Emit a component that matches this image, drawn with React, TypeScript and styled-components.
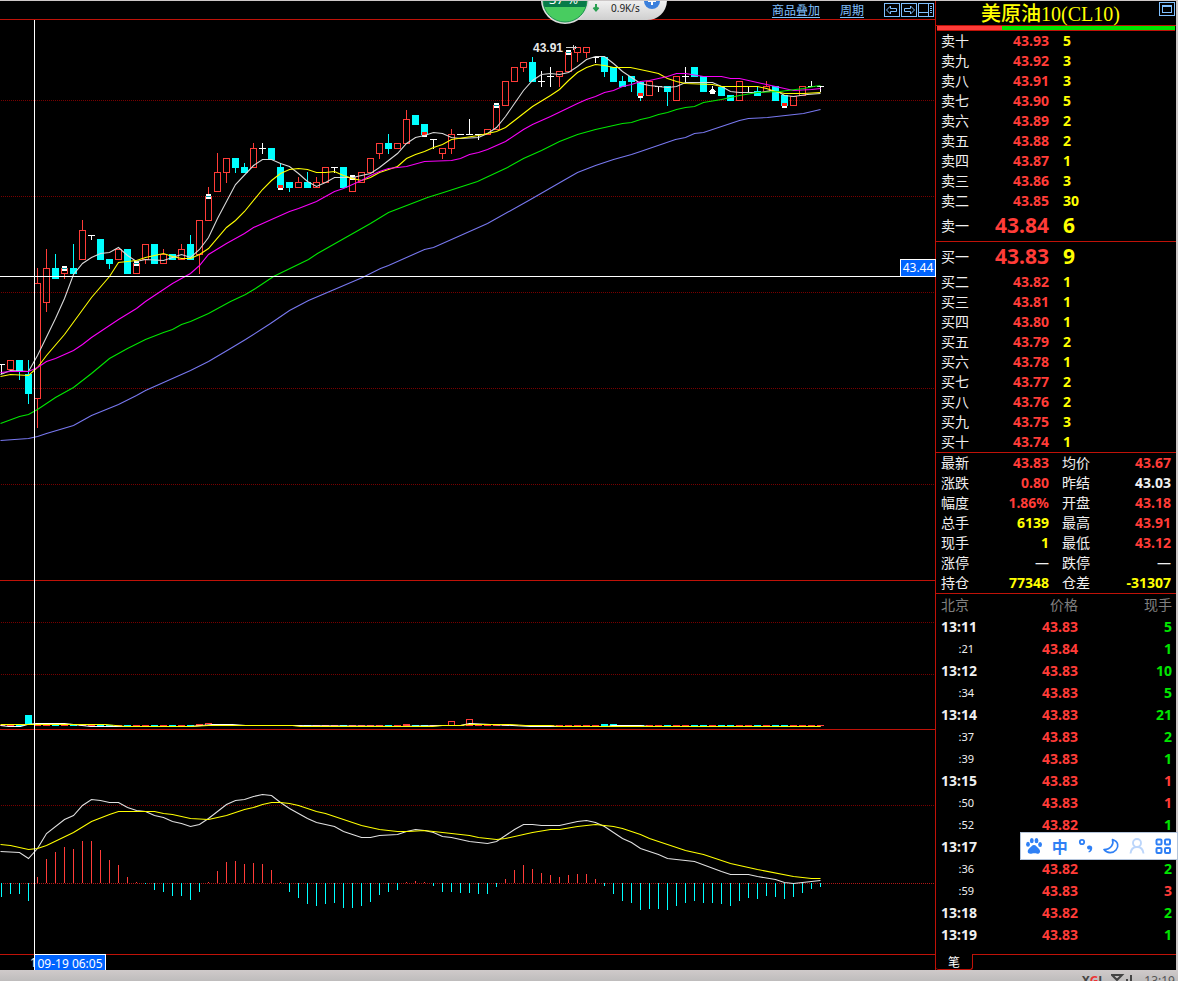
import React from "react";
import styled, { createGlobalStyle } from "styled-components";

const RED = "#ff3c38";
const YELLOW = "#ffff00";
const GREEN = "#00e600";
const CYAN = "#00ffff";
const WHITE = "#f0f0f0";
const RULE = "#bf1208";
const LINK = "#80c0ff";

const GlobalStyle = createGlobalStyle`
  *, *::before, *::after { box-sizing: border-box; }
  body {
    margin: 0;
    background: #000;
    color: ${WHITE};
    font-family: "Noto Sans", "Noto Sans CJK SC", sans-serif;
  }
`;

const Page = styled.div`
  display: flex;
  flex-direction: column;
  min-height: 100vh;
  overflow: hidden;
  border-top: 1px solid #cdc8c8;
`;

const Workspace = styled.main`
  display: flex;
  border-right: 2px solid #cdc8c8;
`;

/* ---------- chart column ---------- */

const ChartColumn = styled.section`
  position: relative;
  flex: 1;
  min-width: 0;
  display: flex;
  flex-direction: column;
  border-right: 1px solid ${RULE};
`;

const Toolbar = styled.nav`
  display: flex;
  justify-content: flex-end;
  align-items: center;
  height: 19px;
  border-bottom: 1px solid ${RULE};
`;

const ToolLink = styled.a`
  color: ${LINK};
  font: 12px/16px "Noto Sans CJK SC", sans-serif;
  text-underline-offset: 2px;
  margin-right: 20px;
`;

const IconButton = styled.button`
  display: block;
  width: 17px;
  height: 15px;
  padding: 0;
  border: 0;
  background: none;
  svg { display: block; }
`;

const Pane = styled.div<{ $height: number }>`
  height: ${(p) => p.$height}px;
  border-bottom: 1px solid ${RULE};
  svg { display: block; width: 100%; height: 100%; }
`;

const DateAxis = styled.div`
  height: 15px;
  padding-left: 30px;
  font-size: 12px;
  line-height: 16px;
`;

const CrossRow = styled.div`
  position: absolute;
  top: 275px;
  left: 0;
  right: 0;
  height: 1px;
  background: #fff;
`;

const CrossColumn = styled.div`
  position: absolute;
  top: 19px;
  bottom: 0;
  left: 34px;
  width: 1px;
  background: #fff;
`;

const PriceFlag = styled.output`
  position: absolute;
  top: 258px;
  right: -1px;
  width: 36px;
  height: 18px;
  border: 1px solid #fff;
  background: #0064ff;
  color: #fff;
  font-size: 12px;
  line-height: 16px;
  text-align: center;
`;

const DateFlag = styled.output`
  position: absolute;
  bottom: 0;
  left: 34px;
  width: 72px;
  height: 16px;
  border: 1px solid #fff;
  border-bottom: 0;
  background: #0064ff;
  color: #fff;
  font-size: 12px;
  line-height: 17px;
  text-align: center;
  white-space: nowrap;
`;

const SpeedWidget = styled.div`
  position: absolute;
  top: -1px;
  left: 541px;
  width: 126px;
  height: 24px;
  overflow: hidden;
  svg { display: block; }
`;

/* ---------- quote column ---------- */

const QuoteColumn = styled.aside`
  position: relative;
  width: 240px;
  flex: none;
  display: flex;
  flex-direction: column;
`;

const Title = styled.header`
  display: flex;
  align-items: flex-start;
  height: 25px;
  padding: 1px 0 0 45px;
  border-bottom: 1px solid ${RULE};
  h1 {
    flex: 1;
    margin: 0;
    color: ${YELLOW};
    font: 500 20px/24px "Liberation Serif", "Noto Sans CJK SC", serif;
  }
`;

const Ratio = styled.div`
  display: flex;
  height: 5px;
  margin: 0 1px;
  border-bottom: 1px solid ${RULE};
  background: ${GREEN};
  span { width: 65px; background: ${RED}; }
`;

const Sheet = styled.table`
  width: 100%;
  border-collapse: separate;
  border-spacing: 0;
  table-layout: fixed;
  font-size: 14px;
  line-height: 20px;
  td, th { padding: 0; text-align: right; white-space: nowrap; }
`;

const Book = styled(Sheet)`
  border-bottom: 1px solid ${RULE};
`;

const Level = styled.tr<{ $best?: boolean }>`
  height: ${(p) => (p.$best ? 30 : 20)}px;
  td {
    font-size: ${(p) => (p.$best ? 21 : 14)}px;
    line-height: ${(p) => (p.$best ? 28 : 20)}px;
    vertical-align: top;
  }
`;

const Label = styled.th<{ $indent?: number }>`
  && { text-align: left; padding: 0 0 2px ${(p) => p.$indent ?? 5}px; }
  font: 400 14px/18px "Noto Sans CJK SC", sans-serif;
`;

const Num = styled.td<{ $color: string }>`
  color: ${(p) => p.$color};
  font-weight: 700;
`;

const Size = styled(Num)`
  && { text-align: left; padding-left: 14px; }
`;

const StatNum = styled(Num)<{ $empty: boolean }>`
  && { font-weight: ${(p) => (p.$empty ? 400 : 700)}; }
  &&:last-child { padding-right: 5px; }
`;

const Trades = styled(Sheet)`
  line-height: 22px;
  margin-bottom: 8px;
  tr { height: 22px; }
  td:last-child, th:last-child { padding-right: 4px; }
  thead th {
    padding-bottom: 2px;
    color: #808080;
    font: 400 14px/20px "Noto Sans CJK SC", sans-serif;
  }
`;

const Time = styled.td<{ $minute: boolean }>`
  && { padding-right: ${(p) => (p.$minute ? 3 : 6)}px; }
  font-size: ${(p) => (p.$minute ? 14 : 11)}px;
  font-weight: ${(p) => (p.$minute ? 700 : 400)};
`;

const TabBar = styled.div`
  display: flex;
  height: 16px;
  &::after { content: ""; flex: 1; border-top: 1px solid ${RULE}; }
`;

const Tab = styled.button`
  width: 37px;
  height: 16px;
  padding: 0;
  border: 1px solid ${RULE};
  border-width: 0 1px 1px 0;
  border-radius: 0 0 3px 3px;
  background: none;
  color: #fff;
  font: 12px/14px "Noto Sans CJK SC", sans-serif;
`;

const InputBar = styled.div`
  position: absolute;
  right: -2px;
  bottom: 110px;
  display: flex;
  justify-content: space-between;
  align-items: center;
  width: 158px;
  height: 28px;
  padding: 0 6px 0 5px;
  border: 1px solid #b4c4da;
  background: #fff;
`;

const InputButton = styled.button`
  width: 16px;
  height: 20px;
  padding: 0;
  border: 0;
  background: none;
  color: #2f80f5;
  font: 700 16px/18px "Noto Sans CJK SC", sans-serif;
  svg { display: block; margin: 2px 0; overflow: visible; }
`;

const Taskbar = styled.footer`
  display: flex;
  flex: 1;
  justify-content: flex-end;
  gap: 9px;
  height: 11px;
  min-height: 11px;
  padding: 3px 3px 0;
  overflow: hidden;
  background: linear-gradient(#cfcaca, #b2b2b2);
  color: #555;
  font-size: 12px;
  line-height: 16px;
  b { color: #444; }
  em { color: #e33; font-style: normal; }
  svg { display: block; }
`;

/* ---------- chart data ---------- */

type Kind = "r" | "c" | "w";
/** kind, high, body top, body bottom, low, marker */
type Candle = [Kind, number, number, number, number, ("cap" | "foot" | "blob")?];

const candles: Candle[] = [
  ["w", 364, 364, 364, 374], ["r", 360, 360, 370, 370], ["c", 360, 360, 371, 380], ["c", 360, 374, 394, 404],
  ["r", 268, 283, 399, 428], ["r", 249, 268, 303, 312], ["c", 254, 268, 279, 279], ["r", 268, 268, 274, 279, "cap"],
  ["c", 244, 268, 274, 274], ["r", 220, 230, 260, 260], ["w", 235, 235, 235, 240], ["c", 239, 239, 260, 260],
  ["c", 259, 259, 264, 269], ["r", 249, 249, 260, 260], ["c", 249, 249, 274, 274], ["r", 262, 263, 274, 274, "cap"],
  ["r", 244, 244, 260, 264], ["c", 244, 244, 264, 264], ["r", 249, 254, 264, 264], ["c", 254, 254, 260, 260],
  ["r", 244, 249, 260, 260], ["c", 235, 244, 260, 260], ["r", 220, 220, 255, 274], ["r", 187, 196, 221, 221, "cap"],
  ["r", 153, 172, 192, 192], ["r", 158, 158, 173, 183], ["c", 158, 158, 168, 173], ["c", 163, 167, 173, 173],
  ["r", 143, 148, 168, 168], ["w", 143, 148, 148, 154], ["c", 148, 148, 160, 160], ["c", 163, 167, 188, 188, "foot"],
  ["c", 182, 182, 188, 192], ["r", 177, 182, 188, 188], ["c", 172, 182, 188, 188], ["r", 177, 182, 188, 188],
  ["r", 167, 167, 183, 183], ["w", 167, 167, 167, 173], ["c", 167, 167, 188, 188], ["r", 177, 177, 192, 192, "cap"],
  ["r", 172, 172, 183, 183], ["r", 158, 158, 173, 173], ["r", 143, 143, 154, 159], ["c", 134, 143, 149, 154],
  ["r", 143, 143, 149, 149], ["r", 110, 119, 144, 144], ["c", 115, 115, 125, 125], ["c", 124, 124, 135, 135, "foot"],
  ["w", 139, 139, 139, 149], ["r", 148, 148, 154, 159], ["r", 129, 134, 149, 154], ["w", 134, 134, 134, 135],
  ["w", 119, 134, 134, 135], ["w", 134, 134, 134, 140], ["r", 129, 129, 135, 135], ["r", 105, 105, 130, 130, "cap"],
  ["r", 81, 81, 106, 106], ["r", 67, 67, 82, 82], ["r", 62, 62, 68, 72], ["c", 57, 62, 82, 82],
  ["w", 71, 81, 81, 87], ["w", 67, 76, 76, 87], ["r", 71, 71, 77, 87], ["r", 52, 52, 72, 72, "cap"],
  ["r", 47, 47, 53, 62], ["r", 47, 47, 53, 58], ["w", 57, 57, 57, 63], ["c", 57, 57, 72, 77],
  ["c", 67, 67, 82, 82], ["c", 76, 81, 87, 87], ["c", 76, 76, 82, 92], ["c", 82, 82, 96, 101, "foot"],
  ["r", 81, 81, 96, 96], ["w", 86, 86, 86, 92], ["c", 86, 86, 92, 106], ["r", 76, 76, 101, 101],
  ["w", 67, 76, 76, 82], ["c", 67, 67, 77, 77], ["c", 76, 76, 92, 92], ["w", 86, 91, 91, 93, "blob"],
  ["c", 87, 87, 96, 96], ["c", 95, 95, 101, 101], ["r", 81, 81, 101, 101], ["w", 86, 86, 86, 92],
  ["c", 86, 91, 96, 96], ["r", 81, 86, 92, 92], ["c", 86, 86, 101, 101], ["c", 95, 95, 106, 106, "foot"],
  ["r", 96, 96, 106, 106], ["r", 86, 86, 96, 96], ["w", 81, 86, 86, 87], ["w", 86, 86, 86, 92],
];

const histogram = [
  -14, -11, -11, -18, 6, 24, 31, 36, 34, 42, 42, 33, 23, 18, 6, 1, -1, -7, -9, -13, -13, -17, -9, 1, 12, 21, 22, 19,
  20, 19, 13, 1, -9, -15, -21, -23, -21, -20, -25, -25, -23, -19, -12, -9, -7, 1, 2, 1, -3, -9, -9, -10, -10, -11,
  -11, -4, 4, 13, 18, 14, 10, 8, 6, 8, 9, 9, 4, -3, -11, -18, -20, -27, -26, -26, -27, -23, -20, -18, -20, -20, -21,
  -23, -18, -15, -16, -13, -14, -16, -14, -10, -6, -4,
];

const averages: [string, string][] = [
  ["#d8d8d8", "0,374 10,370 28,371 37,355 55,318 64,298 73,274 82,263 91,257 100,253 109,252 118,247 127,255 136,261 145,259 163,260 172,257 181,254 190,257 199,249 208,237 217,218 235,184 253,165 262,159 271,159 280,163 289,166 298,173 307,181 316,186 325,182 334,177 352,177 370,173 379,167 388,160 397,153 406,143 415,137 424,135 433,132 442,133 451,137 460,138 478,137 487,133 496,127 505,116 514,103 523,90 532,80 541,74 550,73 559,74 568,72 577,66 586,59 595,56 604,56 613,63 622,71 631,77 640,83 649,85 667,87 676,86 685,82 712,82 721,86 730,91 739,92 760,92 770,90 779,92 784,95 793,96 807,94 820,93"],
  [YELLOW, "0,376 10,374 28,375 37,367 46,355 64,334 91,297 109,276 118,262 127,261 136,260 145,257 163,253 172,256 181,258 190,258 199,254 208,248 226,227 235,220 244,211 262,189 271,180 280,173 289,169 298,168 307,169 316,172 325,172 334,171 343,175 352,178 361,180 370,177 379,172 397,166 406,158 415,154 424,151 433,147 442,144 451,139 478,135 496,131 505,127 514,120 532,106 550,95 559,89 568,80 577,72 586,67 595,64 604,65 613,67 630,67 649,71 658,73 667,78 676,81 685,83 712,84 721,86 757,86 766,88 775,91 784,93 803,93 820,92"],
  ["#f800f8", "0,372 10,371 28,371 37,367 46,361 55,358 73,350 82,344 91,337 118,319 136,308 145,301 172,283 190,273 199,265 208,254 226,243 244,233 253,227 271,219 289,211 298,208 316,201 325,196 334,191 343,188 361,180 370,175 379,171 388,168 406,166 424,161 451,160 460,158 469,154 478,152 487,149 496,145 505,141 523,129 532,124 550,116 577,103 586,99 595,96 604,92 613,90 622,86 631,84 640,81 649,80 667,76 676,73 685,73 703,76 721,76 730,78 739,78 748,80 766,84 784,88 793,90 811,89 820,88"],
  ["#00e800", "0,423 19,416 28,414 37,409 55,397 73,387 91,373 109,358 127,348 145,339 163,332 172,329 181,324 190,321 208,313 230,301 245,294 255,288 273,276 308,259 317,253 370,223 388,212 427,197 443,192 477,181 507,167 523,158 541,150 559,141 577,134 595,129 604,127 622,123 631,122 640,119 649,117 658,114 667,112 676,109 685,107 694,106 703,102 721,99 739,95 757,92 779,91 803,88 813,86 820,85"],
  ["#7878f0", "0,440 28,438 37,436 46,433 73,425 82,420 91,415 118,404 136,395 145,390 190,370 208,361 230,348 245,339 270,323 289,310 308,300 362,277 380,268 388,265 424,249 433,247 487,223 530,199 563,180 577,172 595,165 613,159 631,154 640,151 675,139 685,137 694,133 703,132 721,126 730,123 739,120 748,118 767,117 803,113 820,109"],
];

const dif = "0,851 19,852 28,858 37,848 46,833 64,819 73,815 82,805 91,799 100,800 109,802 118,802 127,807 136,810 145,811 154,815 163,817 172,821 181,823 190,826 199,824 208,818 226,804 235,800 244,799 253,796 262,794 271,795 280,802 289,808 307,818 316,822 334,826 343,831 361,837 370,837 379,835 397,834 406,831 415,829 424,830 433,832 442,836 451,837 469,841 487,843 496,841 505,835 514,829 523,824 532,824 541,825 559,825 568,823 577,821 586,820 595,822 604,826 622,838 631,842 640,848 658,854 667,858 694,861 721,871 730,874 748,874 757,876 775,879 784,882 793,883 802,882 820,880";
const dea = "0,844 10,845 28,849 37,848 46,845 73,832 91,821 109,814 118,811 154,811 163,813 172,814 190,818 208,819 226,815 244,809 253,807 262,804 271,802 280,802 289,803 298,805 316,811 325,813 361,825 379,829 397,831 408,831 424,830 433,831 469,835 478,837 496,839 505,838 523,834 532,832 550,829 559,829 577,826 595,824 613,826 622,828 640,834 649,838 685,850 703,854 730,863 757,869 793,876 811,878 820,878";

const columnX = (i: number) => 1 + i * 9;

const GridLine = ({ y, strong }: { y: number; strong?: boolean }) => (
  <line x1="1" x2="100%" y1={y + 0.5} y2={y + 0.5} stroke={strong ? "#b01818" : "#780000"} strokeDasharray="1 1" />
);

const Curve = ({ points, color }: { points: string; color: string }) => (
  <polyline points={points} fill="none" stroke={color} strokeWidth="1.1" transform="translate(0.5 0.5)" />
);

const CandleMark = ({ data, x }: { data: Candle; x: number }) => {
  const [kind, high, top, bottom, low, mark] = data;
  const color = kind === "r" ? RED : kind === "c" ? CYAN : "#fff";
  return (
    <g shapeRendering="crispEdges">
      {high < top && <rect x={x} y={high} width="1" height={top - high} fill={color} />}
      {low > bottom && <rect x={x} y={bottom} width="1" height={low - bottom} fill={color} />}
      {kind === "r" && <rect x={x - 2.5} y={top + 0.5} width="6" height={bottom - top - 1} fill="none" stroke={color} />}
      {kind === "c" && <rect x={x - 3} y={top} width="7" height={bottom - top} fill={color} />}
      {kind === "w" && <rect x={x - 3} y={top} width="7" height="1" fill={color} />}
      {mark === "cap" && (
        <>
          <rect x={x - 2} y={top - 2} width="5" height="5" fill="#fff" />
          <rect x={x - 2} y={top} width="5" height="1" fill="#00a0a8" />
        </>
      )}
      {mark === "foot" && (
        <>
          <rect x={x - 2} y={bottom - 3} width="5" height="3" fill="#ff1c10" />
          <rect x={x - 2} y={bottom} width="5" height="2" fill="#fff" />
        </>
      )}
      {mark === "blob" && <path d={`M${x - 2} 94v-3l1-2h3l1 2v3z`} fill="#fff" />}
    </g>
  );
};

const PriceChart = () => (
  <svg role="img" aria-label="K线">
    <g transform="translate(0 -20)">
      {[100, 196, 292, 388, 484].map((y) => <GridLine key={y} y={y} />)}
      {candles.map((c, i) => <CandleMark key={i} data={c} x={columnX(i)} />)}
      {averages.map(([color, points]) => <Curve key={color} color={color} points={points} />)}
      <text x="533" y="52" fill="#e8e8e8" fontFamily="Liberation Sans" fontWeight="700" fontSize="12">43.91</text>
      <path d="M566 47.5h11M573.5 45v5M575.5 46v3" stroke="#ccc" fill="none" />
    </g>
  </svg>
);

const tallVolume: Record<number, [number, string]> = {
  22: [724, RED], 23: [723, RED], 45: [724, RED], 50: [721, RED], 52: [719, RED], 67: [724, CYAN], 68: [724, CYAN],
};

const VolumeChart = () => (
  <svg role="img" aria-label="成交量">
    <g transform="translate(0 -581)">
      <GridLine y={622} />
      <GridLine y={674} />
      {candles.map(([kind], i) => {
        const tall = tallVolume[i];
        const x = columnX(i);
        if (i === 3) return <rect key={i} x={x - 3} y="715" width="7" height="10" fill={CYAN} />;
        if (tall) {
          const solid = tall[1] === CYAN;
          return <rect key={i} x={x - 2.5} y={tall[0] + 0.5} width="6" height={725 - tall[0]} fill={solid ? CYAN : "none"} stroke={tall[1]} />;
        }
        return <rect key={i} x={x - 3} y="725" width="7" height="1" fill={kind === "c" ? CYAN : RED} />;
      })}
      <Curve color="#fff" points="0,725 8,726 20,726 27,724 36,723 64,723 73,724 90,726 190,726 212,724 232,724 245,725 292,725 400,726 440,725 460,725 469,723 490,724 512,725 530,726 607,726 612,725 640,725 648,726 820,726" />
      <Curve color={YELLOW} points="0,724 18,724 30,724 105,724 125,726 190,726 208,725 292,725 300,726 432,726 442,725 460,725 468,724 510,724 525,725 550,725 558,726 820,726" />
    </g>
  </svg>
);

const MacdChart = () => (
  <svg role="img" aria-label="MACD">
    <g transform="translate(0 -730)">
      <GridLine y={805} />
      <GridLine y={883} strong />
      {histogram.map((v, i) => (
        <rect key={i} x={columnX(i)} y={v > 0 ? 883 - v : 883} width="1" height={Math.abs(v)} fill={v > 0 ? RED : CYAN} />
      ))}
      <Curve color="#e0e0e0" points={dif} />
      <Curve color={YELLOW} points={dea} />
    </g>
  </svg>
);

/* ---------- quote data ---------- */

type Row = [string, string, string];

const asks: Row[] = [
  ["卖十", "43.93", "5"], ["卖九", "43.92", "3"], ["卖八", "43.91", "3"], ["卖七", "43.90", "5"], ["卖六", "43.89", "2"],
  ["卖五", "43.88", "2"], ["卖四", "43.87", "1"], ["卖三", "43.86", "3"], ["卖二", "43.85", "30"], ["卖一", "43.84", "6"],
];

const bids: Row[] = [
  ["买一", "43.83", "9"], ["买二", "43.82", "1"], ["买三", "43.81", "1"], ["买四", "43.80", "1"], ["买五", "43.79", "2"],
  ["买六", "43.78", "1"], ["买七", "43.77", "2"], ["买八", "43.76", "2"], ["买九", "43.75", "3"], ["买十", "43.74", "1"],
];

const stats: [string, string, string, string, string, string][] = [
  ["最新", "43.83", RED, "均价", "43.67", RED],
  ["涨跌", "0.80", RED, "昨结", "43.03", WHITE],
  ["幅度", "1.86%", RED, "开盘", "43.18", RED],
  ["总手", "6139", YELLOW, "最高", "43.91", RED],
  ["现手", "1", YELLOW, "最低", "43.12", RED],
  ["涨停", "—", WHITE, "跌停", "—", WHITE],
  ["持仓", "77348", YELLOW, "仓差", "-31307", YELLOW],
];

const trades: [string, string, string, string][] = [
  ["13:11", "43.83", "5", GREEN], [":21", "43.84", "1", GREEN], ["13:12", "43.83", "10", GREEN],
  [":34", "43.83", "5", GREEN], ["13:14", "43.83", "21", GREEN], [":37", "43.83", "2", GREEN],
  [":39", "43.83", "1", GREEN], ["13:15", "43.83", "1", RED], [":50", "43.83", "1", RED],
  [":52", "43.82", "1", GREEN], ["13:17", "", "", GREEN], [":36", "43.82", "2", GREEN],
  [":59", "43.83", "3", RED], ["13:18", "43.82", "2", GREEN], ["13:19", "43.83", "1", GREEN],
];

const OrderBook = ({ rows, best }: { rows: Row[]; best: string }) => (
  <Book>
    <colgroup><col style={{ width: 45 }} /><col style={{ width: 68 }} /><col /></colgroup>
    <tbody>
      {rows.map(([name, price, size]) => (
        <Level key={name} $best={name === best}>
          <Label scope="row">{name}</Label>
          <Num $color={RED}>{price}</Num>
          <Size $color={YELLOW}>{size}</Size>
        </Level>
      ))}
    </tbody>
  </Book>
);

const Stats = () => (
  <Book>
    <colgroup><col style={{ width: 45 }} /><col style={{ width: 68 }} /><col style={{ width: 55 }} /><col /></colgroup>
    <tbody>
      {stats.map(([a, av, ac, b, bv, bc]) => (
        <Level key={a}>
          <Label scope="row">{a}</Label>
          <StatNum $color={ac} $empty={av === "—"}>{av}</StatNum>
          <Label scope="row" $indent={13}>{b}</Label>
          <StatNum $color={bc} $empty={bv === "—"}>{bv}</StatNum>
        </Level>
      ))}
    </tbody>
  </Book>
);

const TradeList = () => (
  <Trades>
    <colgroup><col style={{ width: 44 }} /><col style={{ width: 98 }} /><col /></colgroup>
    <thead>
      <tr><Label scope="col">北京</Label><th scope="col">价格</th><th scope="col">现手</th></tr>
    </thead>
    <tbody>
      {trades.map(([time, price, size, color]) => (
        <tr key={time}>
          <Time $minute={time.length > 3}>{time}</Time>
          <Num $color={RED}>{price}</Num>
          <Num $color={color}>{size}</Num>
        </tr>
      ))}
    </tbody>
  </Trades>
);

const InputMethod = () => (
  <InputBar>
    <InputButton aria-label="百度输入法">
      <svg width="16" height="16" fill="currentColor">
        <ellipse cx="2" cy="6.3" rx="1.9" ry="2.5" /><ellipse cx="5.8" cy="2.7" rx="1.9" ry="2.6" />
        <ellipse cx="10.5" cy="2.7" rx="1.9" ry="2.6" /><ellipse cx="14.1" cy="6.5" rx="1.9" ry="2.5" />
        <path d="M8 7c2 0 3 2 4.400 3.300 3 2.700 1.500 5.700-1 5.500-1.400-.2-2-.5-3.400-.5s-2.200.4-3.600.5c-2.700.1-3.900-3-1-5.500C5 9 6 7 8 7z" />
      </svg>
    </InputButton>
    <InputButton>中</InputButton>
    <InputButton aria-label="标点">
      <svg width="16" height="16" fill="none" stroke="currentColor">
        <circle cx="4" cy="4" r="2.200" strokeWidth="1.800" />
        <path d="M11.500 7.500a2 2 0 1 0 .5 3.700c0 1-.6 1.800-1.800 2.400l.7 1c2.600-1.100 3.600-3 3.300-5.100-.2-1.300-1.300-2.100-2.700-2z" fill="currentColor" stroke="none" />
      </svg>
    </InputButton>
    <InputButton aria-label="半角">
      <svg width="16" height="16" fill="none" stroke="currentColor" strokeWidth="1.700" strokeLinejoin="round">
        <path d="M9.500 1.500c1.500 4.500-1.500 10-8.500 10 3 4 9 4 12 .5S15.500 3.500 9.500 1.500z" />
      </svg>
    </InputButton>
    <InputButton aria-label="用户">
      <svg width="16" height="16" fill="none" stroke="#bcd6fb" strokeWidth="1.900">
        <circle cx="8" cy="5" r="4" /><path d="M1.500 15.500c.4-4 3-6.500 6.500-6.500s6.100 2.500 6.500 6.500" />
      </svg>
    </InputButton>
    <InputButton aria-label="工具箱">
      <svg width="16" height="16" fill="none" stroke="currentColor" strokeWidth="2">
        <rect x="1.500" y="1.500" width="5" height="5" rx="1" /><rect x="10" y="1.500" width="5" height="5" rx="1" />
        <rect x="1.500" y="10" width="5" height="5" rx="1" /><rect x="10" y="10" width="5" height="5" rx="1" />
      </svg>
    </InputButton>
  </InputBar>
);

const Frame = ({ children }: { children: React.ReactNode }) => (
  <svg width="17" height="15" fill="none" stroke={LINK} shapeRendering="crispEdges">
    <rect x="0.5" y="0.5" width="15" height="13" />
    {children}
  </svg>
);

const Speed = () => (
  <SpeedWidget>
    <svg width="126" height="24">
      <defs>
        <linearGradient id="pill" x1="0" x2="0" y1="0" y2="1">
          <stop offset="0" stopColor="#f2f2f2" /><stop offset="1" stopColor="#cfcfcf" />
        </linearGradient>
        <clipPath id="disc"><circle cx="24" cy="0" r="22" /></clipPath>
      </defs>
      <path d="M24 0H126C126 12 117 20 106 20H24z" fill="url(#pill)" />
      <circle cx="24" cy="0" r="24" fill="#dcdcdc" />
      <g clipPath="url(#disc)">
        <rect width="48" height="7" fill="#087a48" /><rect y="7" width="48" height="17" fill="#48cc60" />
      </g>
      <circle cx="24" cy="0" r="22" fill="none" stroke="#16914c" />
      <text x="8" y="4" fontFamily="Noto Sans" fontSize="13" fill="#fff">37 %</text>
      <path d="M55 4v5M52.500 7.500L55 10.500l2.500-3" stroke="#2aa052" strokeWidth="2" fill="none" />
      <text x="70" y="12" fontFamily="Noto Sans" fontSize="10" fill="#222">0.9K/s</text>
      <circle cx="111" cy="1" r="8" fill="#3c80dc" />
      <path d="M111-3v8M107 1h8" stroke="#fff" strokeWidth="2" />
    </svg>
  </SpeedWidget>
);

export default function App() {
  return (
    <Page>
      <GlobalStyle />
      <Workspace>
        <ChartColumn>
          <Toolbar>
            <ToolLink href="#overlay">商品叠加</ToolLink>
            <ToolLink href="#period">周期</ToolLink>
            <IconButton aria-label="后退">
              <Frame><path d="M2.500 7l4-4v2.500h6v3h-6V11z" shapeRendering="auto" /></Frame>
            </IconButton>
            <IconButton aria-label="前进">
              <Frame><path d="M13.500 7l-4-4v2.500h-6v3h6V11z" shapeRendering="auto" /></Frame>
            </IconButton>
            <IconButton aria-label="布局">
              <Frame><path d="M10.500 0v14M0 9.500h10M12 3.500h2M12 5.500h2M12 7.500h2M12 9.500h2" /></Frame>
            </IconButton>
          </Toolbar>
          <Pane $height={561}><PriceChart /></Pane>
          <Pane $height={149}><VolumeChart /></Pane>
          <Pane $height={225}><MacdChart /></Pane>
          <DateAxis>1</DateAxis>
          <CrossRow />
          <CrossColumn />
          <PriceFlag>43.44</PriceFlag>
          <DateFlag>09-19 06:05</DateFlag>
          <Speed />
        </ChartColumn>
        <QuoteColumn>
          <Title>
            <h1>美原油10(CL10)</h1>
            <IconButton aria-label="窗口">
              <Frame><rect x="3.500" y="3.500" width="9" height="7" /><path d="M3 4.500h10" /></Frame>
            </IconButton>
          </Title>
          <Ratio><span /></Ratio>
          <OrderBook rows={asks} best="卖一" />
          <OrderBook rows={bids} best="买一" />
          <Stats />
          <TradeList />
          <TabBar><Tab>笔</Tab></TabBar>
          <InputMethod />
        </QuoteColumn>
      </Workspace>
      <Taskbar>
        <b>X<em>G</em>J</b>
        <svg width="24" height="10" fill="none" stroke="#444" strokeWidth="2">
          <path d="M1 2h10L6 7zM6 6v4M16 6v4M20 2v8" />
        </svg>
        <time>13:19</time>
      </Taskbar>
    </Page>
  );
}
